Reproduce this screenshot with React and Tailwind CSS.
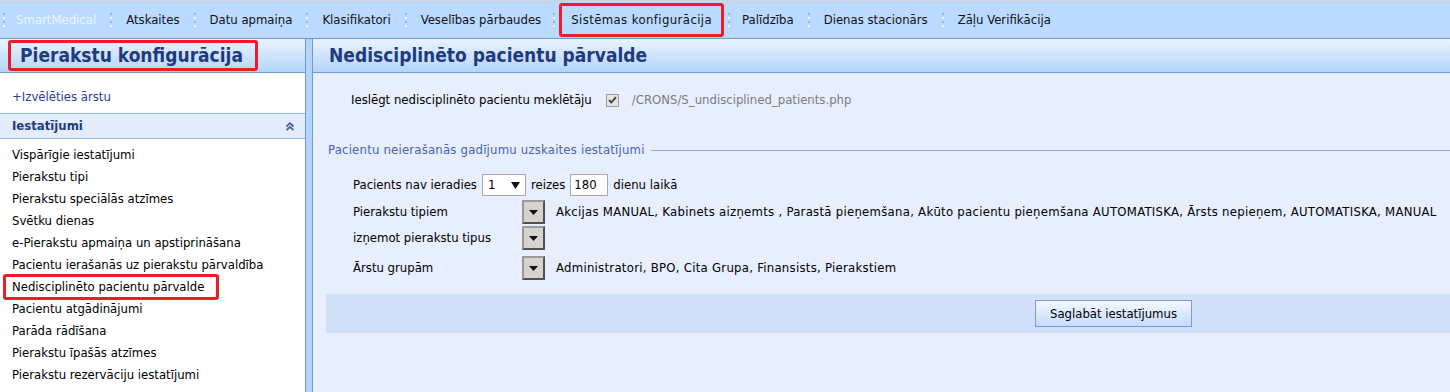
import React from 'react';

const NAV = ['Atskaites', 'Datu apmaiņa', 'Klasifikatori', 'Veselības pārbaudes', 'Sistēmas konfigurācija', 'Palīdzība', 'Dienas stacionārs', 'Zāļu Verifikācija'];

const SETTINGS = [
  'Vispārīgie iestatījumi',
  'Pierakstu tipi',
  'Pierakstu speciālās atzīmes',
  'Svētku dienas',
  'e-Pierakstu apmaiņa un apstiprināšana',
  'Pacientu ierašanās uz pierakstu pārvaldība',
  'Nedisciplinēto pacientu pārvalde',
  'Pacientu atgādinājumi',
  'Parāda rādīšana',
  'Pierakstu īpašās atzīmes',
  'Pierakstu rezervāciju iestatījumi',
];

function Dots({ className }) {
  return (
    <div className={'flex flex-col gap-[2px] ' + className}>
      <span className="block w-[2px] h-[2px] bg-[#8fb6ea]" />
      <span className="block w-[2px] h-[2px] bg-[#f2f7ff]" />
      <span className="block w-[2px] h-[2px] bg-[#8fb6ea]" />
      <span className="block w-[2px] h-[2px] bg-[#f2f7ff]" />
    </div>
  );
}

function DropButton() {
  return (
    <div className="w-[23px] h-[24px] border-2 border-t-[#9a9a9a] border-l-[#9a9a9a] border-r-[#505050] border-b-[#505050] bg-[#d6d3ce] flex items-center justify-center">
      <svg width="9" height="5" viewBox="0 0 9 5"><path d="M0 0h9L4.5 5z" fill="#111" /></svg>
    </div>
  );
}

export default function App() {
  return (
    <div className="w-[1450px] h-[392px] overflow-hidden bg-[#e7eefd] flex flex-col text-[13px] text-black" style={{ fontFamily: 'Tahoma, "DejaVu Sans Condensed", "Liberation Sans", sans-serif' }}>
      {/* top menu */}
      <div className="h-[39px] shrink-0 border-t border-t-[#d2d2d2] border-b border-b-[#6a9ad8] bg-[#bbdaff] flex items-center">
        <Dots className="pl-[3px] pr-[11px]" />
        <span className="pr-[2px] text-[#eef4ff]">SmartMedical</span>
        {NAV.map((item, i) => {
          const prev = NAV[i - 1];
          if (item === 'Sistēmas konfigurācija') {
            return (
              <React.Fragment key={item}>
                <Dots className="pl-[10px] pr-[4px]" />
                <span className="px-[9px] h-[34px] flex items-center border-[3px] border-[#ee1c25] rounded-[3px] text-[#111] tracking-[0.4px]">{item}</span>
              </React.Fragment>
            );
          }
          return (
            <React.Fragment key={item}>
              <Dots className={prev === 'Sistēmas konfigurācija' ? 'pl-[4px] pr-[10px]' : 'px-[12px]'} />
              <span className="px-[2px] text-[#111]">{item}</span>
            </React.Fragment>
          );
        })}
      </div>

      <div className="flex flex-1 min-h-0">
        {/* left panel */}
        <aside className="w-[306px] shrink-0 bg-white border-r border-r-[#6a9ad8] flex flex-col">
          <div className="h-[34px] shrink-0 bg-gradient-to-b from-[#eaf3ff] to-[#b5d4fa] border-b border-b-[#6a9ad8] flex items-center pl-[8px]">
            <div className="h-[31px] pl-[9px] pr-[12px] flex items-center border-[3px] border-[#ee1c25] rounded-[3px]">
              <span className="text-[19px] font-bold text-[#1e3b7d]">Pierakstu konfigurācija</span>
            </div>
          </div>
          <div className="h-[40px] shrink-0 flex items-center pl-[12px] pt-[7px] text-[#283c9c]">+Izvēlēties ārstu</div>
          <div className="h-[26px] shrink-0 border-y border-y-[#93b6e6] bg-[#e3ecfb] flex items-center justify-between pl-[12px] pr-[10px]">
            <span className="font-bold text-[#1e3b7d]">Iestatījumi</span>
            <svg width="10" height="9" viewBox="0 0 10 9" fill="none" stroke="#3d5f9e" strokeWidth="1.8">
              <path d="M1.5 4.5L5 1.2l3.5 3.3M1.5 8.2L5 4.9l3.5 3.3" />
            </svg>
          </div>
          <ul className="pt-[5px] pl-[3px]">
            {SETTINGS.map((s) => (
              <li key={s} className="h-[22px] flex items-center">
                {s === 'Nedisciplinēto pacientu pārvalde' ? (
                  <span className="h-[26px] flex items-center pl-[6px] pr-[12px] border-[3px] border-[#ee1c25] rounded-[3px]">{s}</span>
                ) : (
                  <span className="pl-[9px]">{s}</span>
                )}
              </li>
            ))}
          </ul>
        </aside>

        {/* splitter */}
        <div className="w-[6px] shrink-0 bg-[#b6d4f9]" />

        {/* main */}
        <main className="flex-1 border-l border-l-[#6a9ad8] flex flex-col">
          <div className="h-[34px] shrink-0 bg-gradient-to-b from-[#eaf3ff] to-[#b5d4fa] border-b border-b-[#6a9ad8] flex items-center pl-[16px]">
            <h1 className="text-[19px] font-bold text-[#1e3b7d]">Nedisciplinēto pacientu pārvalde</h1>
          </div>

          <div className="flex items-center pl-[38px] mt-[17px] h-[20px]">
            <span>Ieslēgt nedisciplinēto pacientu meklētāju</span>
            <span className="ml-[14px] w-[13px] h-[13px] border border-[#9c9c9c] bg-[#e4e4e4] flex items-center justify-center">
              <svg width="9" height="8" viewBox="0 0 9 8"><path d="M1 4.2l2.3 2.3L8 1.2" fill="none" stroke="#3a3a3a" strokeWidth="1.8" /></svg>
            </span>
            <span className="ml-[13px] text-[#7d7d7d]">/CRONS/S_undisciplined_patients.php</span>
          </div>

          <div className="flex items-center pl-[15px] mt-[30px] h-[20px]">
            <span className="text-[#4a63a8] tracking-[0.2px]">Pacientu neierašanās gadījumu uzskaites iestatījumi</span>
            <span className="ml-[6px] flex-1 h-[1px] bg-[#8eaede]" />
          </div>

          <div className="pl-[40px] mt-[13px] flex flex-col">
            <div className="flex items-center h-[24px]">
              <span>Pacients nav ieradies</span>
              <span className="ml-[5px] w-[44px] h-[22px] bg-white border border-[#a9a9a9] flex items-center justify-between px-[5px]">
                <span>1</span>
                <svg width="9" height="7" viewBox="0 0 9 7"><path d="M0 0h9L4.5 7z" fill="#111" /></svg>
              </span>
              <span className="ml-[5px]">reizes</span>
              <span className="ml-[5px] w-[38px] h-[22px] bg-white border border-[#a9a9a9] flex items-center px-[3px]">180</span>
              <span className="ml-[5px]">dienu laikā</span>
            </div>
            <div className="flex items-center h-[26px] mt-[2px]">
              <span className="w-[169px]">Pierakstu tipiem</span>
              <DropButton />
              <span className="ml-[11px] tracking-[0.27px]">Akcijas MANUAL, Kabinets aizņemts , Parastā pieņemšana, Akūto pacientu pieņemšana AUTOMATISKA, Ārsts nepieņem, AUTOMATISKA, MANUAL</span>
            </div>
            <div className="flex items-center h-[26px]">
              <span className="w-[169px]">izņemot pierakstu tipus</span>
              <DropButton />
            </div>
            <div className="flex items-center h-[26px] mt-[4px]">
              <span className="w-[169px]">Ārstu grupām</span>
              <DropButton />
              <span className="ml-[11px] tracking-[0.27px]">Administratori, BPO, Cita Grupa, Finansists, Pierakstiem</span>
            </div>
          </div>

          <div className="ml-[13px] mt-[13px] h-[39px] bg-[#d1e0f8] flex items-center pl-[709px]">
            <button className="w-[157px] h-[27px] border border-[#7b9dd6] bg-gradient-to-b from-[#f2f7ff] to-[#c6dbfa] text-[13px] text-black">Saglabāt iestatījumus</button>
          </div>
        </main>
      </div>
    </div>
  );
}
